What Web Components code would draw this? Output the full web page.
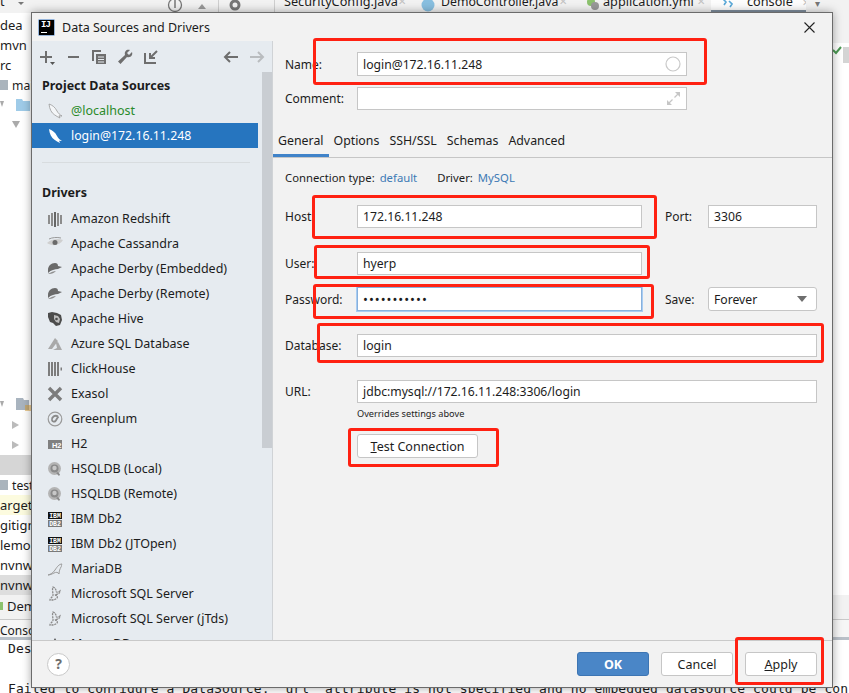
<!DOCTYPE html>
<html>
<head>
<meta charset="utf-8">
<title>Data Sources and Drivers</title>
<style>
    html, body { margin: 0; height: 100%; }
    body {
        width: 849px;
        height: 693px;
        overflow: hidden;
        position: relative;
        background: #fff;
        color: #1c1c1c;
        font: 12.5px 'Noto Sans', sans-serif;
    }
</style>
</head>
<body>
<ide-backdrop></ide-backdrop>

<ds-window>
    <ds-sidebar slot="side">
        <ds-heading>Project Data Sources</ds-heading>
        <ds-row icon="mysql" tone="green">@localhost</ds-row>
        <ds-row icon="mysql" selected>login@172.16.11.248</ds-row>
        <ds-separator></ds-separator>
        <ds-heading short>Drivers</ds-heading>
        <ds-row icon="redshift">Amazon Redshift</ds-row>
        <ds-row icon="cassandra">Apache Cassandra</ds-row>
        <ds-row icon="derby">Apache Derby (Embedded)</ds-row>
        <ds-row icon="derby">Apache Derby (Remote)</ds-row>
        <ds-row icon="hive">Apache Hive</ds-row>
        <ds-row icon="azure">Azure SQL Database</ds-row>
        <ds-row icon="clickhouse">ClickHouse</ds-row>
        <ds-row icon="exasol">Exasol</ds-row>
        <ds-row icon="greenplum">Greenplum</ds-row>
        <ds-row icon="h2">H2</ds-row>
        <ds-row icon="hsqldb">HSQLDB (Local)</ds-row>
        <ds-row icon="hsqldb">HSQLDB (Remote)</ds-row>
        <ds-row icon="ibm">IBM Db2</ds-row>
        <ds-row icon="ibm">IBM Db2 (JTOpen)</ds-row>
        <ds-row icon="mariadb">MariaDB</ds-row>
        <ds-row icon="mssql">Microsoft SQL Server</ds-row>
        <ds-row icon="mssql">Microsoft SQL Server (jTds)</ds-row>
        <ds-row icon="mongo">MongoDB</ds-row>
    </ds-sidebar>
    <ds-form slot="main"></ds-form>
    <ds-footer slot="footer"></ds-footer>
</ds-window>

<red-mark x="313" y="38" w="394" h="47"></red-mark>
<red-mark x="312" y="195" w="345" h="44"></red-mark>
<red-mark x="314" y="245" w="336" h="34"></red-mark>
<red-mark x="313" y="284" w="341" h="35"></red-mark>
<red-mark x="317" y="323" w="507" h="40"></red-mark>
<red-mark x="348" y="428" w="151" h="39"></red-mark>
<red-mark x="735" y="637" w="89" h="48"></red-mark>

<script>
const ICONS = {
    mysql: `<path fill="#f4f6f8" stroke="#9a9a9a" stroke-width=".8" d="M2 1c3 1 6 3 8 7 1 2 3 4 5 5l-3-.2 1 2.2c-2-1-4-2-5.5-3.2C4.5 10 2.5 6 2 1z"/>`,
    mysqlOn: `<path fill="#fff" d="M2 1c3 1 6 3 8 7 1 2 3 4 5 5l-3-.2 1 2.2c-2-1-4-2-5.5-3.2C4.5 10 2.5 6 2 1z"/>`,
    redshift: `<path fill="#8c8c8c" d="M1 4h2v9H1zM4 2h2v13H4zM10 2h2v13h-2zM13 4h2v9h-2z"/><path fill="#666" d="M7 1h2v15H7z"/>`,
    cassandra: `<path fill="#cfcfcf" d="M0 7c4-4 11-5 16-3-3 5-10 7-16 3z"/><circle cx="8" cy="6.5" r="2.5" fill="#6a6a6a"/><path stroke="#999" fill="none" d="M2 3c3-1.5 8-2 12-1"/>`,
    derby: `<path fill="#6a6a6a" d="M1 9c0-4 3-7 7-7 2 0 3 1 3 3l4 1-4 2C8 8 4 9 1 12z"/><path fill="#8e8e8e" d="M1 13c3-2 6-3 8-3-2 2-5 3.5-8 3z"/>`,
    hive: `<path fill="#4c4c4c" d="M1 2l4-1 5 1 4 2 1 5-2 5-4 1-3-3-3-1-2-5z"/><path fill="#bdbdbd" d="M7 4l4 1 2 3-1 4-3-1-2-3z"/><circle cx="9.5" cy="8" r="1.3" fill="#4c4c4c"/>`,
    azure: `<path fill="#a9a9a9" d="M8 2l3 3-6 8H1zM9 7l2-1 4 8H6l4-2z"/>`,
    clickhouse: `<path fill="#7d7d7d" d="M1 1h2v14H1zM4 1h2v14H4zM7 1h2v14H7zM10 1h2v14h-2zM13.5 6.5H15v3h-1.5z"/>`,
    exasol: `<path stroke="#7c7c7c" stroke-width="3.4" d="M2 2l12 12M14 2L2 14"/>`,
    greenplum: `<circle cx="8" cy="8" r="6.8" fill="none" stroke="#9a9a9a" stroke-width="1.2"/><path fill="none" stroke="#8a8a8a" stroke-width="1.8" d="M11 5.5C8 3.5 4.5 6 5 9c.4 2 2.5 2 3.5 1 1-1.2 1.5-3 3-4.5"/>`,
    h2: `<rect x="1" y="4" width="14" height="9" fill="#808080"/><text x="14.5" y="11.5" text-anchor="end" font-family="Liberation Sans" font-weight="700" font-size="7.5" fill="#fff">H2</text>`,
    hsqldb: `<circle cx="7.5" cy="7.5" r="6.5" fill="#b4b4b4"/><circle cx="7.5" cy="7.5" r="4" fill="#8a8a8a"/><circle cx="7.5" cy="7" r="2.2" fill="#c8c8c8"/><path fill="#8a8a8a" d="M9 12l3 3 1-1.5-2-2.5z"/>`,
    ibm: `<rect x="1" y="1" width="14" height="7" fill="#111"/><rect x="1" y="9" width="14" height="7" fill="#7a7a7a"/><text x="8" y="6.8" text-anchor="middle" font-family="Liberation Mono" font-weight="700" font-size="6.5" fill="#fff">IBM</text><text x="8" y="14.8" text-anchor="middle" font-family="Liberation Mono" font-weight="700" font-size="6.5" fill="#fff">DB2</text>`,
    mariadb: `<path fill="none" stroke="#9c9c9c" d="M1 14c3-1 5-2 7-5 2-3 4-6 7-6-1 1 0 2-1 3-1 2-2 4-2 7-1-2-3-2-5-1-2 1-4 2-6 2z"/>`,
    mssql: `<path fill="none" stroke="#8a8a8a" stroke-width="1.3" stroke-dasharray="2 .8" d="M6 1c2 1 3 2 3 4s3 1 4 0c0 3-3 3-5 4 2 0 3 2 2 3-2 2-5 2-7 2 0-2 3-3 3-5S5 3 6 1z"/>`,
    mongo: `<path fill="#555" d="M8 2l5 9H3z"/>`,
}

customElements.define(
    'ide-backdrop',
    class extends HTMLElement {
        constructor() {
            super()
            this.attachShadow({ mode: 'open' })
        }

        connectedCallback() {
            // prettier-ignore
            this.shadowRoot.innerHTML = `
                <style>
                    :host {
                        display: flex;
                        flex-direction: column;
                        height: 693px;
                        width: 849px;
                        overflow: hidden;
                    }
                    .tabs {
                        height: 13px;
                        flex: none;
                        background: #f2f2f2;
                        overflow: hidden;
                        display: flex;
                        align-items: flex-start;
                        font-size: 12.7px;
                        line-height: 13px;
                        white-space: nowrap;
                    }
                    .tabs > * { flex: none; margin-top: -5px; }
                    .tabs svg { margin-top: -3px; }
                    .divider { width: 1px; height: 18px; background: #cfcfcf; }
                    .x { color: #c2c2c2; font-size: 10px; }
                    .console-tab {
                        background: #fdfdfd;
                        border-bottom: 3px solid #80909f;
                        margin-top: 0 !important;
                        height: 13px;
                        width: 95px;
                        display: flex;
                        gap: 6px;
                        padding-left: 11px;
                        box-sizing: border-box;
                        overflow: hidden;
                    }
                    .console-tab svg { margin-top: -4px; flex: none; }
                    .console-tab span { margin-top: -5px; margin-left: 8px; flex: none; }
                    .middle { flex: 1; display: flex; min-height: 0; }
                    .tree { width: 32px; flex: none; padding-top: 2px; font-size: 13px; overflow: hidden; }
                    .tree div {
                        height: 20px;
                        display: flex;
                        align-items: center;
                        gap: 4px;
                        white-space: nowrap;
                        overflow: hidden;
                    }
                    .tree svg { flex: none; }
                    .tree .tight { font-size: 12.2px; }
                    .tree .gap { height: 260px; }
                    .editor { flex: 1; position: relative; }
                    .gutter { height: 30px; background: #f2f2f2; }
                    .checks { display: flex; justify-content: flex-end; gap: 1px; }
                    .checks i {
                        width: 6px;
                        height: 16px;
                        margin-top: 4px;
                        background: #d4d4d4;
                    }
                    .bottom-tabs {
                        height: 25px;
                        flex: none;
                        display: flex;
                        align-items: center;
                        gap: 2px;
                        padding-bottom: 2px;
                        font-size: 13px;
                        background: #f2f2f2;
                        border-bottom: 1px solid #c9c9c9;
                        box-sizing: border-box;
                    }
                    .console-bar {
                        height: 20px;
                        flex: none;
                        box-sizing: border-box;
                        background: #f6f6f6;
                        border-bottom: 3px solid #b9c0c8;
                        font-size: 12px;
                        line-height: 22px;
                        overflow: hidden;
                    }
                    pre {
                        margin: 0;
                        height: 53px;
                        flex: none;
                        padding-left: 8px;
                        font: 13px/17px 'DejaVu Sans Mono', monospace;
                        letter-spacing: .1px;
                        overflow: hidden;
                    }
                    pre span { display: block; height: 40px; }
                </style>
                <div class="tabs">
                    <span style="width:18px">t</span>
                    <svg style="width:6px" width="6" height="13" viewBox="0 0 6 13"><path fill="#777" d="M0 5h6l-3 3z"/></svg>
                    <svg style="margin-left:143px" width="16" height="16" viewBox="0 0 16 16"><circle cx="8" cy="8" r="6.5" fill="none" stroke="#777" stroke-width="1.3"/><path stroke="#777" stroke-width="1.5" d="M8 3v8"/></svg>
                    <svg style="margin-left:14px;margin-top:0" width="10" height="13" viewBox="0 0 10 13"><path fill="#999" d="M1 9l4-5 4 5z"/></svg>
                    <span class="divider" style="margin-left:11px"></span>
                    <svg style="margin-left:9px" width="14" height="16" viewBox="0 0 14 16"><circle cx="7" cy="8" r="4" fill="none" stroke="#777" stroke-width="3"/></svg>
                    <span class="divider" style="margin-left:32px"></span>
                    <span style="margin-left:9px;width:107px">SecurityConfig.java</span>
                    <span class="x" style="margin-left:7px">✕</span>
                    <svg style="margin-left:15px" width="14" height="16" viewBox="0 0 14 16"><circle cx="7" cy="8" r="6.5" fill="#88bfe0"/></svg>
                    <span style="margin-left:6px;width:118px;font-size:12.3px">DemoController.java</span>
                    <span class="x" style="margin-left:0">✕</span>
                    <svg style="margin-left:19px" width="14" height="16" viewBox="0 0 14 16"><circle cx="5" cy="5" r="4" fill="#8cc26e"/><circle cx="9" cy="9" r="4" fill="#999"/></svg>
                    <span style="margin-left:3px;width:87px">application.yml</span>
                    <span class="x" style="margin-left:7px">✕</span>
                    <div class="console-tab" style="margin-left:6px">
                        <svg width="11" height="14" viewBox="0 0 11 14"><path fill="none" stroke="#58a8d8" stroke-width="1.6" d="M1 3l3 3-2 3M7 5l3 3-2 3"/></svg>
                        <span>console</span>
                        <span class="x" style="margin-left:3px;margin-top:-4px">✕</span>
                    </div>
                    <span style="margin-left:9px;color:#777;margin-top:-3px;font-size:10px">▾</span>
                </div>
                <div class="middle">
                    <div class="tree">
                        <div>dea</div>
                        <div>mvn</div>
                        <div>rc</div>
                        <div class="tight"><svg width="8" height="12" viewBox="0 0 8 12"><rect y="1" width="8" height="10" fill="#aab4bd"/></svg>mai</div>
                        <div><svg width="4" height="8" viewBox="0 0 4 8" style="margin-right:8px"><path fill="#aaa" d="M0 0h4L2 6z"/></svg><svg width="14" height="12" viewBox="0 0 14 12"><path fill="#9fcbe8" d="M0 0h6l1 2h7v10H0z"/></svg></div>
                        <div style="padding-left:12px"><svg width="8" height="8" viewBox="0 0 8 8"><path fill="#aaa" d="M0 0h8L4 7z"/></svg></div>
                        <div class="gap"></div>
                        <div><svg width="4" height="8" viewBox="0 0 4 8" style="margin-right:8px"><path fill="#aaa" d="M0 0h4L2 6z"/></svg><svg width="15" height="14" viewBox="0 0 15 14"><path fill="#a9b4bf" d="M0 0h7l1 2h5v10H0z"/><path stroke="#d79a2c" d="M9 8h6M9 10h6M9 12h6"/></svg></div>
                        <div style="padding-left:12px"><svg width="8" height="8" viewBox="0 0 8 8"><path fill="#bbb" d="M0 0l7 4-7 4z"/></svg></div>
                        <div style="padding-left:12px"><svg width="8" height="8" viewBox="0 0 8 8"><path fill="#bbb" d="M0 0l7 4-7 4z"/></svg></div>
                        <div style="background:#d6d6d6"></div>
                        <div class="tight"><svg width="8" height="12" viewBox="0 0 8 12"><rect y="1" width="8" height="10" fill="#aab4bd"/></svg>test</div>
                        <div style="background:#fcfbdf">arget</div>
                        <div>gitign</div>
                        <div>lemo.</div>
                        <div>nvnw</div>
                        <div style="background:#dedede">nvnw.c</div>
                    </div>
                    <div class="editor">
                        <div class="gutter"></div>
                        <div class="checks">
                            <svg width="10" height="16" viewBox="0 0 10 16" style="margin-top:-2px"><path fill="none" stroke="#4c9a54" stroke-width="2" d="M1 9l3 3 5-6"/></svg>
                            <i></i>
                        </div>
                    </div>
                </div>
                <div class="bottom-tabs"><svg width="4" height="12" viewBox="0 0 4 12"><path fill="#8cc26e" d="M0 2h3v8H0z"/></svg><span style="margin-left:1px">Dem</span></div>
                <div class="console-bar">Conso</div>
                <pre><span>Des</span>Failed to configure a DataSource: 'url' attribute is not specified and no embedded datasource could be configured.</pre>
            `
        }
    }
)

customElements.define(
    'ds-window',
    class extends HTMLElement {
        constructor() {
            super()
            this.attachShadow({ mode: 'open' })
        }

        connectedCallback() {
            // prettier-ignore
            this.shadowRoot.innerHTML = `
                <style>
                    :host {
                        position: absolute;
                        left: 31px;
                        top: 12px;
                        width: 802px;
                        height: 676px;
                        box-sizing: border-box;
                        border: 1px solid #6b6b6b;
                        background: #f2f2f2;
                        box-shadow: 0 0 9px rgba(0, 0, 0, .35);
                        display: flex;
                        flex-direction: column;
                    }
                    header {
                        height: 28px;
                        flex: none;
                        display: flex;
                        align-items: center;
                        padding: 0 17px 0 7px;
                    }
                    .logo {
                        width: 15px;
                        height: 15px;
                        background: #000;
                        box-shadow: 0 0 0 .5px #3b79c4;
                        color: #fff;
                        font: 700 9px/11px 'Liberation Mono', monospace;
                        letter-spacing: -1px;
                        padding-left: 2px;
                        box-sizing: border-box;
                        position: relative;
                    }
                    .logo::after {
                        content: '';
                        position: absolute;
                        left: 2px;
                        bottom: 2px;
                        width: 6px;
                        height: 1px;
                        background: #fff;
                    }
                    h1 { flex: 1; margin: 0 0 0 8px; font: inherit; }
                    .content { flex: 1; display: flex; min-height: 0; }
                    .footer { height: 46px; flex: none; border-top: 1px solid #c9c9c9; box-sizing: content-box; }
                </style>
                <header>
                    <div class="logo">IJ</div>
                    <h1>Data Sources and Drivers</h1>
                    <svg width="11" height="11" viewBox="0 0 11 11"><path stroke="#222" stroke-width="1.1" d="M.5.5l10 10M10.5.5l-10 10"/></svg>
                </header>
                <div class="content">
                    <slot name="side"></slot>
                    <slot name="main"></slot>
                </div>
                <div class="footer"><slot name="footer"></slot></div>
            `
        }
    }
)

customElements.define(
    'ds-sidebar',
    class extends HTMLElement {
        constructor() {
            super()
            this.attachShadow({ mode: 'open' })
        }

        connectedCallback() {
            // prettier-ignore
            this.shadowRoot.innerHTML = `
                <style>
                    :host {
                        display: flex;
                        flex-direction: column;
                        width: 241px;
                        flex: none;
                        box-sizing: border-box;
                        background: #e6ebf0;
                        border-right: 1px solid #d0d3d6;
                        overflow: hidden;
                    }
                    .tools {
                        height: 31px;
                        flex: none;
                        display: flex;
                        align-items: center;
                        padding: 0 7px;
                    }
                    .tools svg { flex: none; margin-right: 10px; }
                    .tools .push { margin-left: auto; }
                    .tools .last { margin-right: 0; }
                    .body { flex: 1; display: flex; min-height: 0; }
                    .list { width: 226px; flex: none; }
                    .track { width: 10px; margin-left: 4px; flex: none; }
                    .thumb { height: 376px; background: #c9cdd2; }
                </style>
                <div class="tools">
                    <svg width="16" height="16" viewBox="0 0 16 16"><path stroke="#6e6e6e" stroke-width="2" d="M1 8h12M7 2v12"/><path fill="#555" d="M11 13h5l-2.5 3z"/></svg>
                    <svg width="16" height="16" viewBox="0 0 16 16"><path stroke="#6e6e6e" stroke-width="2" d="M3 8h11"/></svg>
                    <svg width="16" height="16" viewBox="0 0 16 16"><path fill="#6e6e6e" d="M1 1h9v2H3v9H1zM5 5h10v10H5z"/><path stroke="#e6ebf0" d="M7 8h6M7 10.5h6M7 13h6"/></svg>
                    <svg width="16" height="16" viewBox="0 0 16 16"><path fill="#6e6e6e" d="M15 3l-3 3-2-2 3-3c-3-1-6 1-5 5L1 12.5 3.5 15 10 8c4 1 6-2 5-5z"/></svg>
                    <svg width="16" height="16" viewBox="0 0 16 16"><path fill="none" stroke="#6e6e6e" stroke-width="2" d="M2 4v10h11M14 2L7 9M7 4v5h5"/></svg>
                    <svg class="push" width="16" height="16" viewBox="0 0 16 16"><path fill="none" stroke="#6e6e6e" stroke-width="2" d="M15 8H2M7 3L2 8l5 5"/></svg>
                    <svg class="last" width="16" height="16" viewBox="0 0 16 16"><path fill="none" stroke="#b9bcbf" stroke-width="2" d="M1 8h13M9 3l5 5-5 5"/></svg>
                </div>
                <div class="body">
                    <div class="list"><slot></slot></div>
                    <div class="track"><div class="thumb"></div></div>
                </div>
            `
        }
    }
)

customElements.define(
    'ds-heading',
    class extends HTMLElement {
        constructor() {
            super()
            this.attachShadow({ mode: 'open' })
        }

        connectedCallback() {
            this.shadowRoot.innerHTML = `
                <style>
                    :host {
                        display: flex;
                        align-items: center;
                        box-sizing: border-box;
                        height: 26px;
                        padding-left: 10px;
                        font-weight: 700;
                        white-space: nowrap;
                    }
                    :host([short]) { padding-bottom: 1px; }
                </style>
                <slot></slot>
            `
        }
    }
)

customElements.define(
    'ds-separator',
    class extends HTMLElement {
        constructor() {
            super()
            this.attachShadow({ mode: 'open' })
            this.shadowRoot.innerHTML = `
                <style>
                    :host {
                        display: block;
                        height: 1px;
                        margin: 14px 8px 17px 10px;
                        background: #d8dcdf;
                    }
                </style>
            `
        }
    }
)

customElements.define(
    'ds-row',
    class extends HTMLElement {
        constructor() {
            super()
            this.attachShadow({ mode: 'open' })
        }

        connectedCallback() {
            let name = this.getAttribute('icon')
            if (name == 'mysql' && this.hasAttribute('selected')) name = 'mysqlOn'
            // prettier-ignore
            this.shadowRoot.innerHTML = `
                <style>
                    :host {
                        display: flex;
                        align-items: center;
                        gap: 8px;
                        height: 25px;
                        padding-left: 15px;
                        white-space: nowrap;
                    }
                    :host([selected]) { background: #2675bf; color: #fff; font-size: 12.3px; }
                    :host([tone='green']) { color: #2a8a2a; }
                    svg { flex: none; }
                </style>
                <svg width="16" height="16" viewBox="0 0 16 16">${ICONS[name]}</svg>
                <slot></slot>
            `
        }
    }
)

customElements.define(
    'text-field',
    class extends HTMLElement {
        constructor() {
            super()
            this.attachShadow({ mode: 'open' })
        }

        connectedCallback() {
            this.shadowRoot.innerHTML = `
                <style>
                    :host {
                        display: flex;
                        align-items: center;
                        justify-content: space-between;
                        box-sizing: border-box;
                        height: 23px;
                        padding: 0 5px;
                        border: 1px solid #c6c6c6;
                        background: #fff;
                        font-size: 12.2px;
                        white-space: nowrap;
                        overflow: hidden;
                    }
                    :host([tall]) { height: 24px; }
                    :host([focus]) {
                        height: 24px;
                        border-color: #87b0dc;
                        box-shadow: 0 0 0 1px #a8ccf2;
                    }
                    :host([combo]) { height: 24px; border-radius: 3px; }
                </style>
                <span><slot></slot></span>
                <slot name="end"></slot>
            `
        }
    }
)

customElements.define(
    'ds-button',
    class extends HTMLElement {
        constructor() {
            super()
            this.attachShadow({ mode: 'open' })
        }

        connectedCallback() {
            this.shadowRoot.innerHTML = `
                <style>
                    :host {
                        display: inline-flex;
                        align-items: center;
                        justify-content: center;
                        box-sizing: border-box;
                        width: 72px;
                        height: 24px;
                        flex: none;
                        border: 1px solid #c6c6c6;
                        border-radius: 3px;
                        background: #fff;
                        white-space: nowrap;
                    }
                    :host([primary]) {
                        background: #4a86c7;
                        border-color: #3d75b3;
                        color: #fff;
                        font-weight: 700;
                    }
                    :host([wide]) { width: 121px; }
                </style>
                <slot></slot>
            `
        }
    }
)

customElements.define(
    'ds-form',
    class extends HTMLElement {
        constructor() {
            super()
            this.attachShadow({ mode: 'open' })
        }

        connectedCallback() {
            // prettier-ignore
            this.shadowRoot.innerHTML = `
                <style>
                    :host { display: block; flex: 1; min-width: 0; }
                    .lab { font-size: 12px; }
                    .head {
                        display: grid;
                        grid-template-columns: 72px 330px;
                        row-gap: 11px;
                        padding: 11px 0 0 12px;
                        align-items: center;
                    }
                    .tabs {
                        display: flex;
                        height: 29px;
                        margin-top: 19px;
                        box-sizing: border-box;
                        border-bottom: 1px solid #c6c6c6;
                        font-size: 12.35px;
                    }
                    .tabs span {
                        padding: 0 5px;
                        height: 28px;
                        box-sizing: border-box;
                        line-height: 23px;
                    }
                    .tabs .on { border-bottom: 3px solid #4083c9; }
                    .info {
                        display: flex;
                        height: 20px;
                        margin-top: 9px;
                        padding-left: 12px;
                        align-items: center;
                        font-size: 11.3px;
                        white-space: nowrap;
                    }
                    .info a { color: #3d7ab5; margin-left: 5px; }
                    .info .second { margin-left: 20px; }
                    .grid {
                        display: grid;
                        grid-template-columns: 72px 285px 23px 43px 109px;
                        grid-template-rows: 23px 24px 23px 12px 24px 23px 23px 23px 23px;
                        padding: 18px 0 0 12px;
                        align-items: center;
                    }
                    .host { grid-row: 1; }
                    .user { grid-row: 3; }
                    .pass { grid-row: 5; }
                    .db { grid-row: 7; }
                    .url { grid-row: 9; }
                    .wide { grid-column: 2 / 6; }
                    .c2 { grid-column: 2; }
                    .c4 { grid-column: 4; }
                    .c5 { grid-column: 5; }
                    .note { font-size: 9.2px; margin: 3px 0 0 84px; line-height: 15px; }
                    .test { margin: 13px 0 0 84px; }
                    .dots { letter-spacing: 1px; font-size: 13px; }
                </style>
                <div class="head">
                    <span class="lab">Name:</span>
                    <text-field tall>login@172.16.11.248
                        <svg slot="end" width="16" height="16" viewBox="0 0 16 16"><circle cx="8" cy="8" r="7" fill="none" stroke="#c9c9c9" stroke-width="1.2"/></svg>
                    </text-field>
                    <span class="lab">Comment:</span>
                    <text-field>
                        <svg slot="end" width="13" height="13" viewBox="0 0 13 13" style="margin-right:1px"><path fill="none" stroke="#c6c6c6" stroke-width="1.3" d="M12 1L7.5 5.5M1 12l4.5-4.5"/><path fill="#c6c6c6" d="M8 0h5v5zM0 8l5 5H0z"/></svg>
                    </text-field>
                </div>
                <div class="tabs">
                    <span class="on">General</span>
                    <span>Options</span>
                    <span>SSH/SSL</span>
                    <span>Schemas</span>
                    <span>Advanced</span>
                </div>
                <div class="info">
                    <span>Connection type:</span><a>default</a>
                    <span class="second">Driver:</span><a>MySQL</a>
                </div>
                <div class="grid">
                    <span class="lab host">Host:</span>
                    <text-field class="host c2">172.16.11.248</text-field>
                    <span class="lab host c4">Port:</span>
                    <text-field class="host c5">3306</text-field>

                    <span class="lab user">User:</span>
                    <text-field class="user c2">hyerp</text-field>

                    <span class="lab pass">Password:</span>
                    <text-field class="pass c2" focus><span class="dots">•••••••••••</span></text-field>
                    <span class="lab pass c4">Save:</span>
                    <text-field class="pass c5" combo>Forever
                        <svg slot="end" width="10" height="6" viewBox="0 0 10 6" style="margin-right:4px"><path fill="#6e6e6e" d="M0 0h10L5 6z"/></svg>
                    </text-field>

                    <span class="lab db">Database:</span>
                    <text-field class="db wide">login</text-field>

                    <span class="lab url">URL:</span>
                    <text-field class="url wide">jdbc:mysql://172.16.11.248:3306/login</text-field>
                </div>
                <div class="note">Overrides settings above</div>
                <div class="test"><ds-button wide><span><u>T</u>est Connection</span></ds-button></div>
            `
        }
    }
)

customElements.define(
    'ds-footer',
    class extends HTMLElement {
        constructor() {
            super()
            this.attachShadow({ mode: 'open' })
        }

        connectedCallback() {
            // prettier-ignore
            this.shadowRoot.innerHTML = `
                <style>
                    :host {
                        display: flex;
                        align-items: center;
                        gap: 12px;
                        height: 46px;
                        padding: 0 15px;
                    }
                    .help {
                        width: 23px;
                        height: 23px;
                        margin-right: auto;
                        box-sizing: border-box;
                        border: 1px solid #c9c9c9;
                        border-radius: 50%;
                        background: #fff;
                        color: #6e6e6e;
                        font-weight: 700;
                        font-size: 14px;
                        line-height: 20px;
                        text-align: center;
                    }
                </style>
                <div class="help">?</div>
                <ds-button primary>OK</ds-button>
                <ds-button>Cancel</ds-button>
                <ds-button><span><u>A</u>pply</span></ds-button>
            `
        }
    }
)

customElements.define(
    'red-mark',
    class extends HTMLElement {
        constructor() {
            super()
            this.attachShadow({ mode: 'open' })
        }

        connectedCallback() {
            const a = (n) => this.getAttribute(n)
            // prettier-ignore
            this.shadowRoot.innerHTML = `
                <style>
                    :host {
                        position: absolute;
                        left: ${a('x')}px;
                        top: ${a('y')}px;
                        width: ${a('w')}px;
                        height: ${a('h')}px;
                        box-sizing: border-box;
                        border: 3px solid #ff2112;
                        border-radius: 3px;
                        pointer-events: none;
                    }
                </style>
            `
        }
    }
)
</script>
</body>
</html>
